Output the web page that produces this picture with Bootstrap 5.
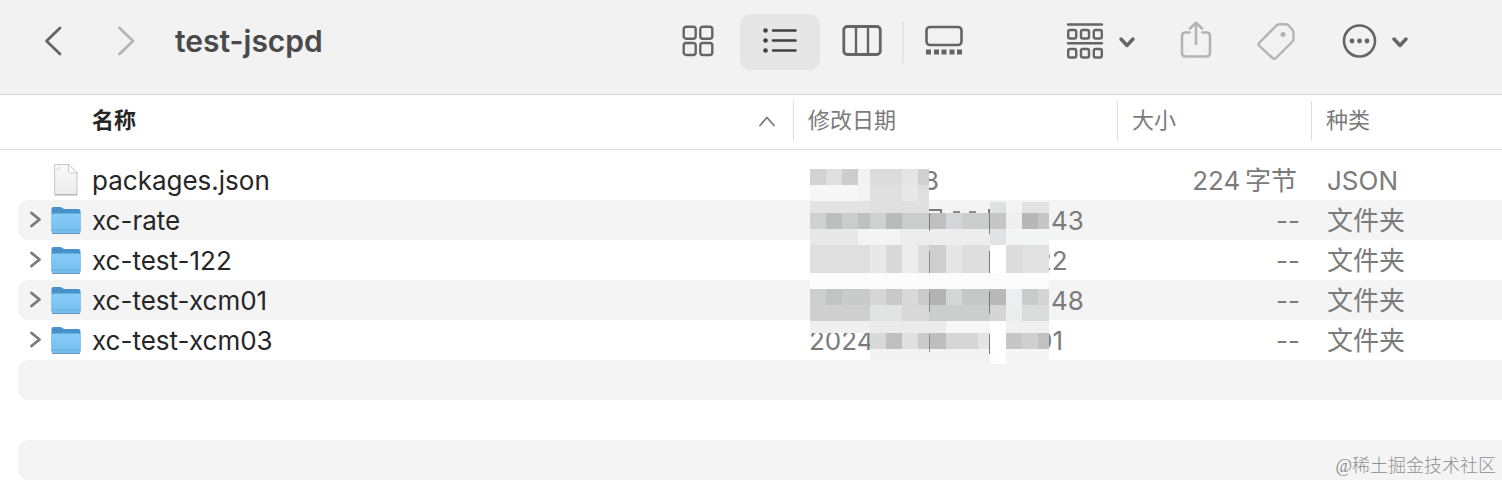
<!DOCTYPE html>
<html lang="zh-CN">
<head>
<meta charset="utf-8">
<meta name="viewport" content="width=device-width, initial-scale=1">
<title>test-jscpd</title>
<link href="https://cdn.jsdelivr.net/npm/bootstrap@5.3.0/dist/css/bootstrap.min.css" rel="stylesheet">
<script src="https://cdn.jsdelivr.net/npm/bootstrap@5.3.0/dist/js/bootstrap.bundle.min.js" defer></script>
<style>
  body { font-family: Inter, "Noto Sans CJK SC", sans-serif; color: #262626; background: #fff; }
  .toolbar { background: #f2f2f2; border-bottom: 1px solid #d6d6d6; height: 95px; padding: 0 94px 10px 33px; color: #656565; }
  .toolbar svg, .files svg { display: block; fill: none; stroke: currentColor; stroke-linecap: round; stroke-linejoin: round; }
  .tool { --bs-btn-padding-x: 0; --bs-btn-padding-y: 0; --bs-btn-border-width: 0px; --bs-btn-border-radius: 10px;
    --bs-btn-color: #656565; --bs-btn-active-bg: #e6e6e6; --bs-btn-active-color: #404040; --bs-btn-disabled-color: #b4b4b4; --bs-btn-disabled-opacity: 1;
    height: 56px; padding-bottom: 2px; display: flex; align-items: center; justify-content: center; }
  .nav-btn { width: 40px; }
  .view-btn { width: 80px; }
  .act-btn { width: 68px; }
  .group-btn { width: 84px; }
  .more-btn { width: 86px; }
  .view-sep { width: 2px; height: 42px; margin: 0 -2px; background: #e6e6e6; }
  .win-title { font-size: 30px; line-height: 40px; font-weight: 600; color: #4a4a4a; padding: 0 0 2px 38px; }
  .views { gap: 2px; margin-right: 82px; }
  .acts { gap: 12px; }
  .files { table-layout: fixed; width: 100%; border-collapse: separate; border-spacing: 0; font-size: 26px; line-height: 38px; color: #7b7b7b; }
  .files th { height: 55px; padding: 6px 0 8px; border-bottom: 1px solid #dcdcdc; font-size: 22px; font-weight: 400; vertical-align: middle; }
  .files th > div { height: 40px; padding-left: 14px; line-height: 38px; border-left: 1px solid #dedede; }
  .files th > .name-head { padding: 0 17px 2px 92px; border: 0; color: #262626; font-weight: 700; }
  .name-head svg { color: #7a7a7a; }
  .files tbody::before { content: "\200b"; display: block; line-height: 10px; font-size: 2px; }
  .files td { height: 40px; padding: 2px 0 0 16px; white-space: nowrap; }
  .files td:first-child { padding: 0 0 0 18px; color: #262626; }
  .line { height: 40px; border-radius: 10px 0 0 10px; padding: 2px 0 0 8px; }
  .files tr:nth-child(even) .line, .files tr:nth-child(even) td:not(:first-child) { background: #f4f4f4; }
  .w-date { width: 324px; } .w-size { width: 194px; } .w-kind { width: 191px; }
  .files td.size { padding: 2px 14px 0 0; }
  .files td.no-size { padding: 2px 11px 0 0; }
  .twist { width: 20px; height: 40px; margin-bottom: 2px; }
  .file-icon { width: 32px; height: 32px; margin: 0 10px 2px 4px; }
  .date-start { width: 242px; }
  .date-narrow { width: 227px; }
  .date-short { width: 114px; }
  .mosaic { position: absolute; left: 16px; top: 8px; pointer-events: none; }
  .watermark { position: absolute; right: 6px; bottom: 2px; font: 18px/24px "Liberation Serif", "Noto Sans CJK SC", serif; font-weight: 300; color: #8f8f8f; }
</style>
</head>
<body>
<svg width="0" height="0" class="position-absolute" aria-hidden="true">
  <defs>
    <linearGradient id="front" x1="0" y1="0" x2="0" y2="1"><stop offset="0" stop-color="#87cbf8"/><stop offset="1" stop-color="#74bdec"/></linearGradient>
    <linearGradient id="paper" x1="0" y1="0" x2="0" y2="1"><stop offset="0" stop-color="#fbfbfb"/><stop offset="1" stop-color="#ebebeb"/></linearGradient>
    <symbol id="folder" viewBox="0 0 32 32">
      <path d="M1.500 27V5Q1.500 3 3.500 3H10Q11.500 3 12.500 4L14 5H28Q30.500 5 30.500 7.500V27Z" fill="#4593c8" stroke="none"/>
      <path d="M1.500 11.500Q1.500 9.500 3.500 9.500H28.500Q30.500 9.500 30.500 11.500V27.500Q30.500 29.500 28.500 29.500H3.500Q1.500 29.500 1.500 27.500Z" fill="url(#front)" stroke="none"/>
      <path d="M2 26H30" stroke="#69b1df" stroke-width="1"/>
      <path d="M2.500 29.500H29.500" stroke="#669bbd" stroke-width="1"/>
    </symbol>
    <symbol id="twisty" viewBox="0 0 20 40"><path d="M5.500 13L13.500 19.500L5.500 26" stroke="#7a7a7a" stroke-width="2.800" fill="none"/></symbol>
  </defs>
</svg>

<header class="toolbar d-flex align-items-center">
  <button class="btn tool nav-btn" type="button" aria-label="后退"><svg width="40" height="40" viewBox="0 0 40 40" stroke-width="2.800"><path d="M27 7L13.500 20L27 33"/></svg></button>
  <button class="btn tool nav-btn ms-4" type="button" aria-label="前进" disabled><svg width="40" height="40" viewBox="0 0 40 40" stroke-width="2.800"><path d="M22.500 7L36 20L22.500 33"/></svg></button>
  <h1 class="win-title mb-0 flex-grow-1">test-jscpd</h1>
  <div class="views d-flex align-items-center" role="group" aria-label="显示方式">
    <button class="btn tool view-btn" type="button" aria-label="图标"><svg width="36" height="36" viewBox="0 0 36 36" stroke-width="2.400"><rect x="3.700" y="3.700" width="12" height="12" rx="2.500"/><rect x="20.300" y="3.700" width="12" height="12" rx="2.500"/><rect x="3.700" y="20" width="12" height="12" rx="2.500"/><rect x="20.300" y="20" width="12" height="12" rx="2.500"/></svg></button>
    <button class="btn tool view-btn active" type="button" aria-label="列表"><svg width="40" height="36" viewBox="0 0 40 36" stroke-width="2.600"><path d="M13 7.500H35.500M13 17.500H35.500M13 27.500H35.500"/><g fill="currentColor" stroke="none"><circle cx="5.500" cy="7.500" r="2.300"/><circle cx="5.500" cy="17.500" r="2.300"/><circle cx="5.500" cy="27.500" r="2.300"/></g></svg></button>
    <button class="btn tool view-btn" type="button" aria-label="分栏"><svg width="42" height="36" viewBox="0 0 42 36" stroke-width="2.800"><rect x="2.800" y="3.500" width="36.500" height="28" rx="3.500"/><path d="M15 4V31M27 4V31" stroke-width="2.400"/></svg></button>
    <span class="view-sep"></span>
    <button class="btn tool view-btn" type="button" aria-label="画廊"><svg width="40" height="36" viewBox="0 0 40 36" stroke-width="2.600"><rect x="2.500" y="4" width="35" height="18" rx="3.500"/><path d="M2 26.500H7V31.500H2ZM10 26.500H15V31.500H10ZM17.500 26.500H22.500V31.500H17.500ZM25.500 26.500H30.500V31.500H25.500ZM33 26.500H38V31.500H33Z" fill="currentColor" stroke="none"/></svg></button>
  </div>
  <div class="acts d-flex align-items-center">
    <button class="btn tool group-btn justify-content-start" type="button" aria-label="分组"><svg width="72" height="40" viewBox="0 0 72 40" stroke-width="2.400"><path d="M2 3.500H36M2 22.200H36"/><rect x="2.200" y="9" width="8" height="8.500" rx="1.800"/><rect x="15" y="9" width="8" height="8.500" rx="1.800"/><rect x="27.800" y="9" width="8" height="8.500" rx="1.800"/><rect x="2.200" y="28" width="8" height="8.500" rx="1.800"/><rect x="15" y="28" width="8" height="8.500" rx="1.800"/><rect x="27.800" y="28" width="8" height="8.500" rx="1.800"/><path d="M55 18L61 24.500L67 18" stroke-width="3.400"/></svg></button>
    <button class="btn tool act-btn" type="button" aria-label="共享" disabled><svg width="36" height="40" viewBox="0 0 36 40" stroke-width="2.600"><path d="M11.500 11.500H7.500Q4 11.500 4 15V32Q4 35.500 7.500 35.500H28.500Q32 35.500 32 32V15Q32 11.500 28.500 11.500H24.500"/><path d="M18 23V2M12 7.500L18 1.800L24 7.500"/></svg></button>
    <button class="btn tool act-btn" type="button" aria-label="标签" disabled><svg width="40" height="40" viewBox="0 0 40 40" stroke-width="2.400"><path d="M20.500 4.500Q21.800 3.300 23.500 3.300H30Q31.500 3.300 32.700 4.500L36.500 9Q37.500 10.200 37.500 12V18Q37.500 19.500 36.500 20.500L20 37Q18.200 38.500 16.500 37L2.800 24.300Q1.800 23.300 2.900 22.200Z"/><circle cx="27" cy="13.500" r="2.500" fill="currentColor" stroke="none"/></svg></button>
    <button class="btn tool more-btn justify-content-end" type="button" aria-label="更多"><svg width="68" height="40" viewBox="0 0 68 40" stroke-width="2.600"><circle cx="19.500" cy="20" r="15.500"/><g fill="currentColor" stroke="none"><circle cx="12" cy="20" r="2.400"/><circle cx="19.500" cy="20" r="2.400"/><circle cx="27" cy="20" r="2.400"/></g><path d="M54 18L60 24.500L66 18" stroke-width="3.400"/></svg></button>
  </div>
</header>

<main class="position-relative">
  <table class="files">
    <thead>
      <tr>
        <th scope="col"><div class="name-head d-flex align-items-center justify-content-between">名称<svg width="18" height="18" viewBox="0 0 18 18" stroke-width="1.800"><path d="M2 14.500L9 6.500L16 14.500"/></svg></div></th>
        <th scope="col" class="w-date"><div>修改日期</div></th>
        <th scope="col" class="w-size"><div>大小</div></th>
        <th scope="col" class="w-kind"><div>种类</div></th>
      </tr>
    </thead>
    <tbody>
      <tr>
        <td><div class="line d-flex align-items-center"><span class="twist"></span><svg class="file-icon" viewBox="0 0 32 32"><path d="M5 .500H18.500L27 9V30.500H5Z" fill="url(#paper)" stroke="#c6c6c6" stroke-width="1"/><path d="M18.500 .500V7Q18.500 9 20.500 9H27Z" fill="#fff" stroke="#c9c9c9" stroke-width="1"/><path d="M5 31H27" stroke="#adadad" stroke-width="1"/><path d="M7.500 4V6M9.500 3V5" stroke="#d0d0d0" stroke-width="1"/></svg>packages.json</div></td>
        <td class="position-relative"><div class="d-flex"><span class="date-short"></span><span>8</span></div><svg class="mosaic" id="mosaic" width="244" height="200" viewBox="809 168 244 200" shape-rendering="crispEdges" aria-hidden="true"></svg></td>
        <td class="size text-end">224&thinsp;字节</td><td>JSON</td>
      </tr>
      <tr>
        <td><div class="line d-flex align-items-center"><svg class="twist"><use href="#twisty"/></svg><svg class="file-icon"><use href="#folder"/></svg>xc-rate</div></td>
        <td><div class="d-flex"><span class="date-start"></span><span>43</span></div></td>
        <td class="no-size text-end">--</td><td>文件夹</td>
      </tr>
      <tr>
        <td><div class="line d-flex align-items-center"><svg class="twist"><use href="#twisty"/></svg><svg class="file-icon"><use href="#folder"/></svg>xc-test-122</div></td>
        <td><div class="d-flex"><span class="date-narrow"></span><span>22</span></div></td>
        <td class="no-size text-end">--</td><td>文件夹</td>
      </tr>
      <tr>
        <td><div class="line d-flex align-items-center"><svg class="twist"><use href="#twisty"/></svg><svg class="file-icon"><use href="#folder"/></svg>xc-test-xcm01</div></td>
        <td><div class="d-flex"><span class="date-start"></span><span>48</span></div></td>
        <td class="no-size text-end">--</td><td>文件夹</td>
      </tr>
      <tr>
        <td><div class="line d-flex align-items-center"><svg class="twist"><use href="#twisty"/></svg><svg class="file-icon"><use href="#folder"/></svg>xc-test-xcm03</div></td>
        <td><div class="d-flex"><span class="date-narrow">2024</span><span>01</span></div></td>
        <td class="no-size text-end">--</td><td>文件夹</td>
      </tr>
      <tr><td><div class="line"></div></td><td></td><td></td><td></td></tr>
      <tr><td><div class="line"></div></td><td></td><td></td><td></td></tr>
      <tr><td><div class="line"></div></td><td></td><td></td><td></td></tr>
    </tbody>
  </table>
  <div class="watermark">@稀土掘金技术社区</div>
</main>

<script>
  // Privacy mosaic over the dates: each band is [top, bottom, "left shade ... right"].
  const bands = [
    [169, 185, "810 d2d2d2 826 dfdfdf 842 cdcdcd 858 f2f2f2 870 dcdcdc 902 e5e5e5 918 d0d0d0 929"],
    [185, 201, "810 f7f7f7 858 f3f3f3 870 e0e0e0 902 e8e8e8 918 dfdfdf 929"],
    [201, 213, "810 e3e3e3 870 e0e0e0 929"],
    [202, 213, "990 dfe1e1 1006 f3f3f3 1022 e2e2e2 1049"],
    [213, 229, "810 cfd1d1 826 bdbfbf 842 cbcdcd 858 bfc0c0 870 cfd1d1 886 b9bbbb 902 cbcdcd 929 bfbfbf 946 d3d7d7 962 cbcdcd 990 c6c6c6 1006 efefef 1022 b7b7b7 1038 c6c6c6 1049"],
    [229, 245, "810 e8e8e8 858 f4f4f4 900 ededed 990 e0e3e3 1006 f3f5f5 1049"],
    [245, 273, "810 dfdfdf 870 e8e8e8 886 d9d9d9 902 ececec 918 dcdcdc 929 cfcfcf 946 e6e6e6 962 dedede 990 ffffff 1006 dcdcdc 1022 e2e2e2 1049"],
    [273, 289, "810 fcfcfc 1049"],
    [289, 305, "810 cdcfcf 826 c2c4c4 842 c9cbcb 870 d7d7d7 886 c9c9c9 902 d9d9d9 918 cbcbcb 929 b3b3b3 946 d5d7d7 962 c6c8c8 990 b9b9b9 1006 ecefef 1022 cacccc 1038 d4d4d4 1049"],
    [305, 321, "810 cfcfcf 870 e2e4e4 902 d8d8d8 929 cccece 990 d5d5d5 1006 eceeee 1022 dadcdc 1049"],
    [321, 333, "810 f0f0f0 870 ebebeb 946 f7f7f7 990 ffffff 1006 f0f0f0 1049"],
    [333, 349, "870 d9d9d9 886 bfbfbf 902 e0e0e0 918 cbcbcb 929 bebebe 946 d6d6d6 978 e4e4e4 990 ffffff 1006 c6c6c6 1022 cfcfcf 1038 c2c2c2 1049"],
    [349, 364, "870 f3f3f3 990 fefefe 1006 f5f5f5 1049"],
    // slivers of characters left between the blocks
    [213, 231, "929 7b7b7b 930"], [213, 234, "989 7b7b7b 990"],
    [251, 273, "929 8b8b8b 930"], [251, 273, "989 7b7b7b 990"],
    [292, 312, "929 8b8b8b 930"], [291, 314, "989 7b7b7b 990"],
    [334, 352, "929 8b8b8b 930"], [334, 354, "989 7b7b7b 990"],
    [209, 211, "929 7b7b7b 942"], [211, 213, "940 7b7b7b 942"],
    [211, 213, "953 8b8b8b 960"], [211, 213, "969 8b8b8b 976"], [209, 213, "988 7b7b7b 990"]
  ];
  document.getElementById("mosaic").innerHTML = bands.map(([top, bottom, row]) => {
    const t = row.split(" ");
    let out = "";
    for (let i = 0; i + 2 < t.length; i += 2)
      out += `<rect x="${t[i]}" y="${top}" width="${t[i + 2] - t[i]}" height="${bottom - top}" fill="#${t[i + 1]}" stroke="none"/>`;
    return out;
  }).join("");
</script>
</body>
</html>
